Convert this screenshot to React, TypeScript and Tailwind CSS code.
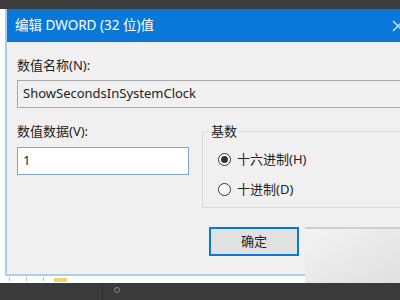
const font = { fontFamily: '"Noto Sans", "Noto Sans CJK SC", sans-serif' };

function Radio({ checked, label }: { checked?: boolean; label: string }) {
  return (
    <div className="flex items-center gap-[6px]">
      <span className="w-[13px] h-[13px] rounded-full border border-[#333] bg-white flex items-center justify-center">
        {checked && <span className="w-[7px] h-[7px] rounded-full bg-[#333]" />}
      </span>
      <span className="text-[13px] text-[#222]">{label}</span>
    </div>
  );
}

export default function App() {
  return (
    <div className="w-[400px] h-[300px] overflow-hidden bg-white relative" style={font}>
      <div className="h-[9px] bg-[#3c3c3c]" />

      <div className="flex h-[267px]">
        <div className="w-[5px] bg-white shrink-0" />
        <div className="flex-1 flex flex-col border-l-2 border-b-2 border-[#a6d0ec] bg-[#f0f0f0]">
          <div className="h-[33px] shrink-0 bg-[#0a78d8] flex items-center justify-between pl-[8px]">
            <span className="text-white text-[13.5px]">编辑 DWORD (32 位)值</span>
            <svg width="8" height="12" viewBox="0 0 8 12" className="shrink-0">
              <path d="M1 1 L11 11 M11 1 L1 11" stroke="#d4e8f8" strokeWidth="1.3" />
            </svg>
          </div>

          <div className="flex flex-col pl-[10px]">
            <div className="mt-[14px] text-[13px] leading-[19px] text-[#222]">数值名称(N):</div>
            <div className="mt-[5px] h-[28px] border border-r-0 border-[#a8a8a8] bg-[#f0f0f0] flex items-center pl-[5px] text-[13px] text-[#222]">
              ShowSecondsInSystemClock
            </div>

            <div className="flex mt-[14px]">
              <div className="flex flex-col w-[185px]">
                <div className="text-[13px] leading-[19px] text-[#222]">数值数据(V):</div>
                <div className="mt-[6px] w-[172px] h-[28px] border border-[#7ea3c9] bg-white flex items-center pl-[5px] text-[13px] text-[#222]">
                  1
                </div>
              </div>
              <div className="flex-1 relative">
                <div className="mt-[9px] h-[77px] border border-r-0 border-[#dcdcdc] flex flex-col gap-[10px] pl-[15px] pt-[18px]">
                  <Radio checked label="十六进制(H)" />
                  <Radio label="十进制(D)" />
                </div>
                <span className="absolute left-[7px] top-[1px] px-[2px] bg-[#f0f0f0] text-[13px] leading-[16px] text-[#222]">基数</span>
              </div>
            </div>

            <div className="flex mt-[19px] pl-[192px]">
              <div className="w-[90px] h-[29px] border-2 border-[#0a78d8] bg-[#e1e1e1] flex items-center justify-center text-[13px] text-[#222]">
                确定
              </div>
            </div>
          </div>
        </div>
      </div>

      <div className="h-[7px] bg-white relative">
        <div className="absolute left-[9px] top-[1px] w-[1px] h-[4px] bg-[#bbb]" />
        <div className="absolute left-[26px] top-[1px] w-[1px] h-[4px] bg-[#bbb]" />
        <div className="absolute left-[43px] top-[1px] w-[1px] h-[4px] bg-[#bbb]" />
        <div className="absolute left-[54px] top-[2px] w-[13px] h-[4px] bg-[#f5d36a]" />
      </div>
      <div className="h-[17px] bg-[#3a3a3a] relative">
        <div className="absolute left-[102px] top-0 w-[1px] h-[17px] bg-[#2e2e2e]" />
        <span className="absolute left-[114px] top-[4px] w-[6px] h-[6px] rounded-full border border-[#888]" />
      </div>

      <div className="absolute left-[305px] top-[227px] w-[95px] h-[56px] bg-gradient-to-br from-[#f3f3f3] to-[#e0e0e0] border-t-2 border-[#cfcfcf]" />
    </div>
  );
}
